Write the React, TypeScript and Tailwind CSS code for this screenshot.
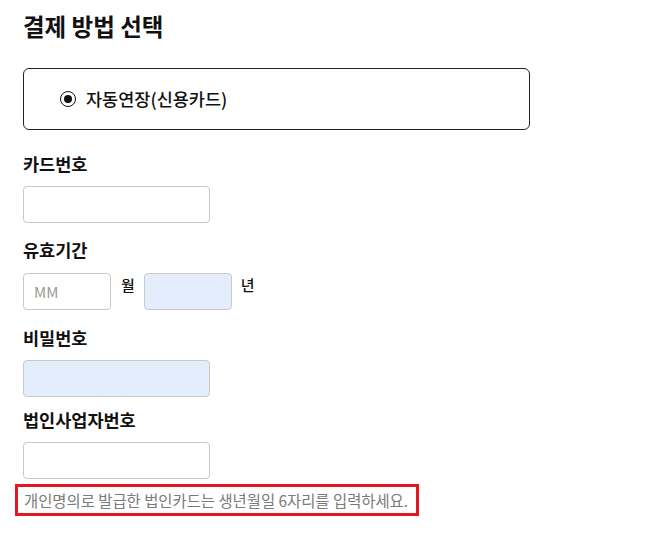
const font = "font-['Noto_Sans_CJK_KR','Noto_Sans',sans-serif]"

function Field({ className = "", filled = false, placeholder }: { className?: string; filled?: boolean; placeholder?: string }) {
  return (
    <input
      readOnly
      placeholder={placeholder}
      className={`h-[37px] rounded-[4px] border border-[#c9c9c9] px-[10px] text-[15px] text-[#222] outline-none placeholder:text-[#9a9a9a] ${filled ? "bg-[#e3edfb]" : "bg-white"} ${className}`}
    />
  )
}

function Label({ children, className = "" }: { children: React.ReactNode; className?: string }) {
  return <div className={`text-[17.5px] font-bold leading-[24px] text-[#111] ${className}`}>{children}</div>
}

export default function App() {
  return (
    <div className={`min-h-screen bg-white px-[23px] pt-[10px] ${font}`}>
      <h2 className="text-[23.5px] font-bold leading-[32px] text-[#111]">결제 방법 선택</h2>

      <div className="mt-[26px] flex h-[62px] w-[507px] items-center rounded-[6px] border border-[#222] pl-[36px]">
        <span className="flex h-[16px] w-[16px] items-center justify-center rounded-full border-[1.5px] border-[#111]">
          <span className="h-[8px] w-[8px] rounded-full bg-[#111]" />
        </span>
        <span className="ml-[10px] text-[17.5px] font-medium text-[#111]">자동연장(신용카드)</span>
      </div>

      <Label className="mt-[22px]">카드번호</Label>
      <Field className="mt-[10px] w-[187px]" />

      <Label className="mt-[15px]">유효기간</Label>
      <div className="mt-[11px] flex items-start">
        <Field className="w-[88px]" placeholder="MM" />
        <span className="ml-[10px] mt-[2px] text-[15px] font-medium leading-[20px] text-[#111]">월</span>
        <Field className="ml-[9px] w-[88px]" filled />
        <span className="ml-[9px] mt-[2px] text-[15px] font-medium leading-[20px] text-[#111]">년</span>
      </div>

      <Label className="mt-[16px]">비밀번호</Label>
      <Field className="mt-[10px] w-[187px]" filled />

      <Label className="mt-[11px]">법인사업자번호</Label>
      <Field className="mt-[10px] w-[187px]" />

      <div className="-ml-[8px] mt-[5px] w-[404px] border-[3px] border-[#e4161f] py-[2px] pl-[6px] text-[15.4px] leading-[22px] text-[#7a7a7a]">
        개인명의로 발급한 법인카드는 생년월일 6자리를 입력하세요.
      </div>
    </div>
  )
}
